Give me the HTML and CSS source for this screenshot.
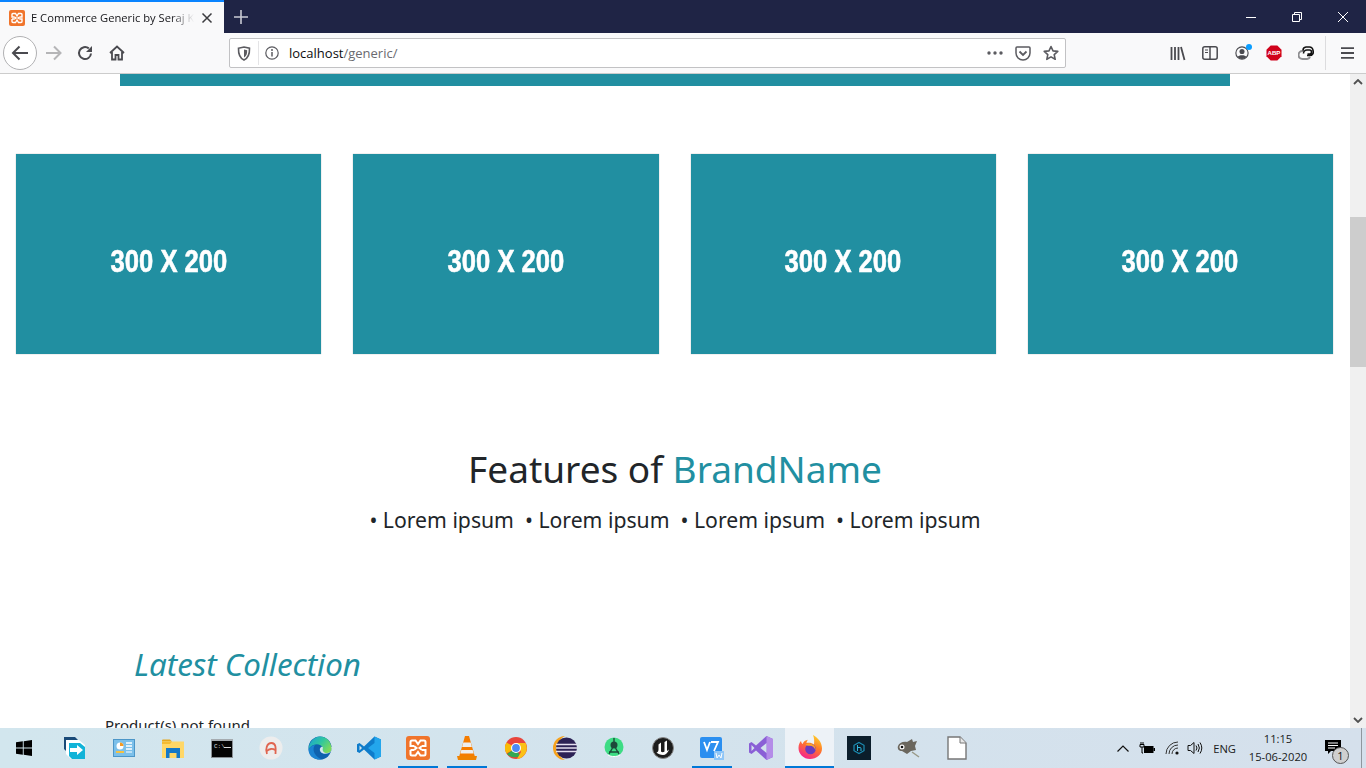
FILE: index.html
```html
<!DOCTYPE html>
<html lang="en">
<head>
    <meta charset="UTF-8">
    <meta name="viewport" content="width=device-width, initial-scale=1.0">
    <title>E Commerce Generic by Seraj Khan</title>
    <link rel="stylesheet" href="styles.css">
</head>
<body>
    <div class="tabbar">
        <div class="tab">
            <svg class="favicon" width="16" height="16" viewBox="0 0 16 16"><rect width="16" height="16" rx="2" fill="#f0742b"/><path d="M4 3.500h2.500L8 6l1.500-2.500H12a1 1 0 0 1 1 1V7h-2.500M4 3.500a1 1 0 0 0-1 1V7h2.500M3 9h2.500M3 9v2.500a1 1 0 0 0 1 1h2.500L8 10l1.500 2.500H12a1 1 0 0 0 1-1V9h-2.500M5.500 7 7 8l-1.500 1M10.500 7 9 8l1.500 1" fill="none" stroke="#fff" stroke-width="1.400"/></svg>
            <span class="tab-title">E Commerce Generic by Seraj Khan</span>
            <svg class="tab-close" width="12" height="12" viewBox="0 0 12 12"><path d="M1.500 1.500l9 9M10.500 1.500l-9 9" stroke="#3c3c3f" stroke-width="1.500"/></svg>
        </div>
        <svg class="new-tab" width="14" height="14" viewBox="0 0 14 14"><path d="M7 0v14M0 7h14" stroke="#c9cad3" stroke-width="1.600"/></svg>
        <div class="win-buttons">
            <div class="win-btn"><svg width="12" height="12" viewBox="0 0 12 12"><path d="M1 6.500h10" stroke="#fff"/></svg></div>
            <div class="win-btn"><svg width="12" height="12" viewBox="0 0 12 12"><path d="M1.500 3.500h7v7h-7zM3.500 3.500v-2h7v7h-2" fill="none" stroke="#fff"/></svg></div>
            <div class="win-btn"><svg width="12" height="12" viewBox="0 0 12 12"><path d="M1 1l10 10M11 1L1 11" stroke="#fff"/></svg></div>
        </div>
    </div>

    <div class="navbar">
        <div class="back-btn">
            <svg width="18" height="16" viewBox="0 0 18 16"><path d="M17 8H2M8.500 1.500 2 8l6.500 6.500" fill="none" stroke="#4a4a4f" stroke-width="2"/></svg>
        </div>
        <div class="nav-btn"><svg width="17" height="16" viewBox="0 0 17 16"><path d="M1 8h14M9 1.500 15.500 8 9 14.500" fill="none" stroke="#b5b5b7" stroke-width="2"/></svg></div>
        <div class="nav-btn"><svg width="16" height="16" viewBox="0 0 16 16"><path d="M14 8.500A6 6 0 1 1 11.800 3.400" fill="none" stroke="#4a4a4f" stroke-width="2"/><path d="M15 1v6H9z" fill="#4a4a4f"/></svg></div>
        <div class="nav-btn"><svg width="16" height="16" viewBox="0 0 16 16"><path d="M1 8 8 1.500 15 8M3 7v7.500h3.500V10h3v4.500H13V7" fill="none" stroke="#4a4a4f" stroke-width="1.800"/></svg></div>

        <div class="urlbar">
            <svg class="url-shield" width="14" height="15" viewBox="0 0 14 15"><path d="M1.500 2.200 7 1l5.500 1.200c.2 5.500-1.200 9.800-5.500 11.800C2.700 12 1.300 7.700 1.500 2.200z" fill="none" stroke="#5b5b60" stroke-width="1.600"/><path d="M7 3.500l3.200.7C10.200 7.800 9.500 10 7 11.500z" fill="#5b5b60"/></svg>
            <span class="url-sep"></span>
            <svg class="url-info" width="14" height="14" viewBox="0 0 14 14"><circle cx="7" cy="7" r="6.200" fill="none" stroke="#5b5b60" stroke-width="1.200"/><path d="M7 6v4.500" stroke="#5b5b60" stroke-width="1.500"/><circle cx="7" cy="3.900" r="1" fill="#5b5b60"/></svg>
            <span class="url-text">localhost<span class="url-path">/generic/</span></span>
            <div class="url-actions">
                <svg width="16" height="4" viewBox="0 0 16 4"><circle cx="2" cy="2" r="1.700" fill="#5b5b60"/><circle cx="8" cy="2" r="1.700" fill="#5b5b60"/><circle cx="14" cy="2" r="1.700" fill="#5b5b60"/></svg>
                <svg width="16" height="15" viewBox="0 0 16 15"><path d="M2 1h12a1 1 0 0 1 1 1v5a7 7 0 0 1-14 0V2a1 1 0 0 1 1-1z" fill="none" stroke="#5b5b60" stroke-width="1.500"/><path d="M4.500 5.500 8 9l3.500-3.500" fill="none" stroke="#5b5b60" stroke-width="1.800"/></svg>
                <svg width="16" height="16" viewBox="0 0 16 16"><path d="M8 1.500l2 4.400 4.800.5-3.600 3.200 1 4.700L8 11.900l-4.200 2.400 1-4.700L1.200 6.400 6 5.900z" fill="none" stroke="#5b5b60" stroke-width="1.600" stroke-linejoin="round"/></svg>
            </div>
        </div>

        <div class="tools">
            <div class="nav-btn"><svg width="16" height="15" viewBox="0 0 16 15"><path d="M1.500 1v13M5 1v13M8.500 1v13M11 1l3.500 13" fill="none" stroke="#4a4a4f" stroke-width="1.800"/></svg></div>
            <div class="nav-btn"><svg width="16" height="14" viewBox="0 0 16 14"><rect x=".8" y=".8" width="14.400" height="12.400" rx="2" fill="none" stroke="#4a4a4f" stroke-width="1.500"/><path d="M8 1v12" stroke="#4a4a4f" stroke-width="1.500"/><path d="M3 4h3M3 6.500h3" stroke="#4a4a4f"/></svg></div>
            <div class="nav-btn account">
                <svg width="14" height="14" viewBox="0 0 16 16"><circle cx="8" cy="8" r="7" fill="none" stroke="#4a4a4f" stroke-width="1.300"/><circle cx="8" cy="6.200" r="2.900" fill="#4a4a4f"/><path d="M3 12.500c1-2.700 9-2.700 10 0A6.500 6.500 0 0 1 3 12.500z" fill="#4a4a4f"/></svg>
                <span class="account-dot"></span>
            </div>
            <div class="nav-btn"><svg width="16" height="16" viewBox="0 0 17 17"><path d="M5 .5h7L16.500 5v7L12 16.500H5L.5 12V5z" fill="#d0021b"/><text x="8.500" y="11" class="abp-text" text-anchor="middle">ABP</text></svg></div>
            <div class="nav-btn"><svg width="16" height="14" viewBox="0 0 16 14"><path d="M6 5H4.500a3.500 3.500 0 0 0 0 8H9a3.500 3.500 0 0 0 3-2" fill="none" stroke="#8e8e91" stroke-width="2"/><path d="M5.500 7.500A3.500 3.500 0 0 1 9 4h2.500a2 2 0 0 1 0 4H9.500M5 4.500A3.500 3.500 0 0 1 8 1h3.500a3.500 3.500 0 0 1 3.500 3.500 3.500 3.500 0 0 1-3.500 5H9" fill="none" stroke="#111" stroke-width="1.600"/></svg></div>
            <span class="tool-sep"></span>
            <div class="nav-btn"><svg width="13" height="12" viewBox="0 0 13 12"><path d="M0 1.200h13M0 6h13M0 10.800h13" stroke="#4a4a4f" stroke-width="1.800"/></svg></div>
        </div>
    </div>

    <div class="viewport">
        <main class="page">
            <div class="top-strip"></div>

            <div class="banners">
                <div class="banner"><span class="banner-label">300 X 200</span></div>
                <div class="banner"><span class="banner-label">300 X 200</span></div>
                <div class="banner"><span class="banner-label">300 X 200</span></div>
                <div class="banner"><span class="banner-label">300 X 200</span></div>
            </div>

            <section class="features">
                <h2 class="features-title">Features of <span class="brand">BrandName</span></h2>
                <p class="features-list">• Lorem ipsum &nbsp;• Lorem ipsum &nbsp;• Lorem ipsum &nbsp;• Lorem ipsum</p>
            </section>

            <section class="collection">
                <h3 class="collection-title">Latest Collection</h3>
                <p class="empty-msg">Product(s) not found</p>
            </section>
        </main>

        <div class="scrollbar">
            <svg class="scroll-arrow" width="10" height="6" viewBox="0 0 10 6"><path d="M1 5l4-4 4 4" fill="none" stroke="#505050" stroke-width="1.800"/></svg>
            <div class="scroll-thumb"></div>
            <svg class="scroll-arrow scroll-arrow-down" width="10" height="6" viewBox="0 0 10 6"><path d="M1 1l4 4 4-4" fill="none" stroke="#505050" stroke-width="1.800"/></svg>
        </div>
    </div>

    <footer class="taskbar">
        <div class="start"><svg width="16" height="16" viewBox="0 0 16 16"><path d="M0 2.300 6.800 1.300v6.200H0zM7.700 1.200 16 0v7.500H7.700zM0 8.500h6.800v6.200L0 13.700zM7.700 8.500H16V16l-8.300-1.200z" fill="#000"/></svg></div>
        <div class="task"><svg width="24" height="24" viewBox="0 0 24 24"><path d="M1 1h11l5 5v12H6L1 13z" fill="#1a4a78"/><path d="M3 4h13l6 5v14H8l-5-5z" fill="#fff"/><path d="M6 7h11l5 4v12H9l-3-3z" fill="#12b3d8"/><path d="M7 12h7V9l6 5-6 5v-3H7z" fill="#fff"/></svg></div>
        <div class="task"><svg width="22" height="18" viewBox="0 0 22 18"><rect x=".5" y=".5" width="21" height="17" fill="#7cc0ea" stroke="#4c96c8"/><circle cx="7" cy="7" r="3.500" fill="#fff"/><path d="M7 7V3.500A3.500 3.500 0 0 1 10.500 7z" fill="#f59a23"/><path d="M13 4h6M13 7h6M13 10h6" stroke="#fff" stroke-width="1.500"/><path d="M3 13h8" stroke="#f5c242" stroke-width="2"/><path d="M13 13h6" stroke="#fff"/></svg></div>
        <div class="task"><svg width="22" height="19" viewBox="0 0 22 19"><path d="M0 1.500a1 1 0 0 1 1-1h7l2 2H0z" fill="#e6a81e"/><path d="M0 2.500h22V19H0z" fill="#ffd767"/><path d="M4 9h14v10h-3.500v-5h-7v5H4z" fill="#1478c8"/><path d="M0 2.500h10L8 5H0z" fill="#f4bb33"/></svg></div>
        <div class="task"><svg width="22" height="19" viewBox="0 0 22 19"><rect x=".5" y=".5" width="21" height="18" fill="#050505" stroke="#8a8f94"/><path d="M0 0h22v2H0z" fill="#a5abb0"/><text x="3" y="9" class="cmd-text">C:\</text><path d="M13 8.500h7" stroke="#ddd"/></svg></div>
        <div class="task"><svg width="24" height="24" viewBox="0 0 24 24"><circle cx="12" cy="12" r="11.500" fill="#ededed"/><path d="M8 18c-2-5 0-11 4.500-11S17 12 16.500 18M8 15c2-2.500 6-2.500 8-1" fill="none" stroke="#e0644f" stroke-width="1.800"/></svg></div>
        <div class="task"><svg width="24" height="24" viewBox="0 0 24 24"><defs><linearGradient id="edgeGreen" x1="0" y1="0" x2="1" y2=".6"><stop offset="0" stop-color="#1a9fd8"/><stop offset=".55" stop-color="#2fc6a0"/><stop offset="1" stop-color="#7ad95c"/></linearGradient></defs><circle cx="12" cy="12" r="11.500" fill="#0f62ae"/><path d="M23.500 14c-2 4.500-8.500 5-11 1.800-1.300-1.800-.8-4.300 1.500-5.300l10 .5z" fill="#d2e5ee"/><path d="M12 .5C18.500.5 23.500 5.500 23.500 13c0 3-3 4.500-5.800 4-2.500-.5-3.700-3-2.700-5.200C13.500 8.500 9 7.500 5.500 9 3.200 10 1.500 11.500.5 13.500 1 6 6 .5 12 .5z" fill="url(#edgeGreen)"/><path d="M.5 13.500C2 11 4 9.500 7 9c-1.800 2.300-2 6 0 9 1.500 2.500 4 4.500 7 5.300C6 24.500.5 20 .5 13.500z" fill="#1b83d2"/></svg></div>
        <div class="task"><svg width="24" height="24" viewBox="0 0 24 24"><path d="M17.500.5 24 3.500v17L17.500 23.500 7 13.500 2.500 17 0 15.700V8.300L2.500 7 7 10.500z" fill="#0e7ccb"/><path d="M17.500.5 24 3.500v17l-6.500 3V17L11 12l6.500-5z" fill="#23a6ec"/><path d="M2.500 9.500v5L5 12z" fill="#d2e5ee"/></svg></div>
        <div class="task"><svg width="24" height="24" viewBox="0 0 24 24"><rect width="24" height="24" rx="3" fill="#f0742b"/><path d="M6 4.500h3.500L12 8l2.500-3.500H18a1.500 1.500 0 0 1 1.500 1.500v4H16M6 4.500A1.500 1.500 0 0 0 4.500 6v4H8M4.500 14H8M4.500 14v4A1.500 1.500 0 0 0 6 19.500h3.500L12 16l2.500 3.500H18a1.500 1.500 0 0 0 1.500-1.500v-4H16M8 10l2.500 2L8 14M16 10l-2.500 2 2.500 2" fill="none" stroke="#fff" stroke-width="2"/></svg></div>
        <div class="task"><svg width="20" height="24" viewBox="0 0 20 24"><path d="M8 0h4l6 21H2z" fill="#f57c00"/><path d="M6.300 6.500h7.400l1.200 4.500H5.100zM4.300 14h11.400l1 3.500H3.300z" fill="#eee"/><path d="M0 20h20l-1 4H1z" fill="#ef8200"/></svg></div>
        <div class="task"><svg width="22" height="22" viewBox="0 0 22 22"><circle cx="11" cy="11" r="11" fill="#e8453c"/><path d="M11 11 1.500 16.500A11 11 0 0 1 1.500 5.500z" fill="#f9bc05"/><path d="M2 17 11 11l4 8a11 11 0 0 1-13-2z" fill="#34a853"/><path d="M11 6h9.600A11 11 0 0 1 12 22l4-7z" fill="#fbc116"/><circle cx="11" cy="11" r="5" fill="#fff"/><circle cx="11" cy="11" r="3.900" fill="#4b8bf5"/></svg></div>
        <div class="task"><svg width="24" height="24" viewBox="0 0 24 24"><path d="M12 0a12 12 0 0 0 0 24c-5-2-6-7-6-12S7 2 12 0z" fill="#f6a21e"/><circle cx="13.500" cy="12" r="10.500" fill="#2c2255"/><path d="M3 8.500h21M3 12h21M3 15.500h21" stroke="#e4dff0" stroke-width="1.500"/></svg></div>
        <div class="task"><svg width="20" height="22" viewBox="0 0 20 22"><circle cx="10" cy="10" r="9.500" fill="#3ddc84"/><circle cx="10" cy="8" r="3.500" fill="#1d4a3a"/><path d="M10 1v4M5 17l3.500-6M15 17l-3.500-6M5 15h10" stroke="#1d4a3a" stroke-width="1.400"/><path d="M4 18c3 2 9 2 12 0" fill="none" stroke="#fff"/></svg></div>
        <div class="task"><svg width="22" height="22" viewBox="0 0 22 22"><circle cx="11" cy="11" r="10.500" fill="#1d1d1d" stroke="#888"/><path d="M4.500 15.500C6.500 15 6.500 13 6.500 12V7.500L9 5.500V14c0 1.500 2.500 1.500 3.500.5V5l2.500-1.500V14l2-1.500C16 16 13.500 18 11 18c-2.500 0-5-1-6.500-2.500z" fill="#fff"/></svg></div>
        <div class="task"><svg width="24" height="24" viewBox="0 0 24 24"><rect y="1" width="22" height="21" rx="2" fill="#2b8ff0"/><path d="M4 6l3 8 3-8M11 6h7l-4 9" fill="none" stroke="#fff" stroke-width="1.800"/><rect x="14" y="15" width="10" height="9" fill="#8fc6f7"/><path d="M16 17l1 5 2-3 2 3 1-5" fill="none" stroke="#fff"/></svg></div>
        <div class="task"><svg width="24" height="24" viewBox="0 0 24 24"><path d="M17.500 0 24 3v18l-6.500 3L7 14.500 2.500 18 0 16.500v-9L2.500 6 7 9.500z" fill="#8a5fd6"/><path d="M17.500 0 24 3v18l-6.500 3z" fill="#b48ce8"/><path d="M17.500 7l-6 5 6 5zM2.500 9v6L5.500 12z" fill="#d3e2ed"/></svg></div>
        <div class="task task-active"><svg width="24" height="24" viewBox="0 0 24 24"><defs><linearGradient id="foxFlame" x1=".8" y1="0" x2=".3" y2="1"><stop offset="0" stop-color="#ffd52a"/><stop offset=".45" stop-color="#ff7a28"/><stop offset="1" stop-color="#f5208f"/></linearGradient></defs><path d="M15 0c4.500 2.500 9 7 9 13.500C24 19.500 18.500 24 12 24 5.500 24 .5 19 .5 13c0-3 1-5.500 2.500-7 .3 1.500.8 2.500 1.700 3C5.500 6.500 7.500 5 10 4.800 9 6 8.500 7 8.500 8c2.500-.8 5.500-.3 7.500 1.500C16.500 6 16.200 3 15 0z" fill="url(#foxFlame)"/><circle cx="12.500" cy="14" r="5.300" fill="#6b3bbd"/><path d="M7.500 9.500c3-1.700 7-1 9 1.500 1 1.500 1.200 3 1 4.500-.8-3-3-4.700-5.500-4.700-1.500 0-3 .3-4.500-1.300z" fill="#ffa526"/></svg></div>
        <div class="task"><svg width="24" height="24" viewBox="0 0 24 24"><rect width="24" height="24" fill="#0b1e2b"/><path d="M12 6.500 17 9.300v5.400L12 17.500l-5-2.800V9.300z" fill="none" stroke="#1b8db3" stroke-width="1.200"/><path d="M10.500 9v6M10.500 11.500h2.500a1 1 0 0 1 1 1V15" fill="none" stroke="#31b8df"/></svg></div>
        <div class="task"><svg width="24" height="20" viewBox="0 0 24 20"><path d="M2 8c1-3 5-5 9-4l5-3 1 3 4-1-2 5 1 4-5 1-4 3-5-3C3 13 1 11 2 8z" fill="#6b675e"/><circle cx="6" cy="9" r="2.500" fill="#fff"/><circle cx="6" cy="9" r="1.300" fill="#111"/><path d="M16 14l7 5" stroke="#998" stroke-width="1.500"/></svg></div>
        <div class="task"><svg width="20" height="24" viewBox="0 0 20 24"><path d="M1 1h12l6 6v16H1z" fill="#fff" stroke="#777" stroke-width="1.400"/><path d="M13 1v6h6" fill="#e8e8e8" stroke="#777"/></svg></div>

        <div class="tray">
            <svg class="tray-chevron" width="12" height="7" viewBox="0 0 12 7"><path d="M.5 6.500 6 1l5.500 5.500" fill="none" stroke="#111" stroke-width="1.200"/></svg>
            <svg class="tray-battery" width="16" height="12" viewBox="0 0 16 12"><path d="M1 2.500h4v2.500H1zM2 0v2.500M4 0v2.500M3 5v6h1" fill="none" stroke="#000"/><rect x="5" y="4" width="9.500" height="7" fill="#000"/><path d="M14.500 6H16v3h-1.500z" fill="#000"/></svg>
            <svg class="tray-wifi" width="15" height="14" viewBox="0 0 15 14"><path d="M1 13A12 12 0 0 1 13 1M4 13A9 9 0 0 1 13 4M7 13a6 6 0 0 1 6-6" fill="none" stroke="#333"/><circle cx="12" cy="12" r="1.600" fill="#111"/></svg>
            <svg class="tray-volume" width="16" height="14" viewBox="0 0 16 14"><path d="M1 4.500h2.500L7 1.500v11l-3.500-3H1z" fill="none" stroke="#111"/><path d="M9 4.500a4 4 0 0 1 0 5M11 3a7 7 0 0 1 0 8M13 1.500a10 10 0 0 1 0 11" fill="none" stroke="#111"/></svg>
            <span class="tray-lang">ENG</span>
            <div class="clock"><span>11:15</span><span>15-06-2020</span></div>
            <div class="notify">
                <svg width="16" height="14" viewBox="0 0 16 14"><path d="M0 0h16v11H6l-3 3v-3H0z" fill="#000"/><path d="M3 3h10M3 5.500h10M3 8h7" stroke="#fff"/></svg>
                <span class="notify-badge">1</span>
            </div>
            <span class="show-desktop"></span>
        </div>
    </footer>
</body>
</html>
```

FILE: styles.css
```css
* {
    box-sizing: border-box;
}

html, body {
    margin: 0;
    height: 768px;
    overflow: hidden;
}

body {
    font-family: "Noto Sans", sans-serif;
    background-color: #fff;
    color: #212529;
    display: flex;
    flex-direction: column;
}

svg {
    display: block;
    flex: none;
}

/* browser tab strip */
.tabbar {
    height: 33px;
    background-color: #1f2445;
    display: flex;
    align-items: center;
    flex: none;
}

.tab {
    width: 224px;
    height: 33px;
    background-color: #f9f9fa;
    border-top: 2px solid #0a84ff;
    display: flex;
    align-items: center;
    padding: 0 11px 0 9px;
}

.favicon {
    margin-right: 6px;
}

.tab-title {
    flex: 1;
    font-family: "Open Sans", sans-serif;
    font-size: 11.200px;
    white-space: nowrap;
    overflow: hidden;
    color: #16161a;
    -webkit-mask-image: linear-gradient(to right, #000 86%, transparent);
    mask-image: linear-gradient(to right, #000 86%, transparent);
}

.tab-close {
    margin-left: 7px;
}

.new-tab {
    margin-left: 10px;
}

.win-buttons {
    margin-left: auto;
    display: flex;
}

.win-btn {
    width: 46px;
    height: 33px;
    display: flex;
    align-items: center;
    justify-content: center;
}

/* toolbar */
.navbar {
    height: 41px;
    background-color: #f9f9fa;
    border-bottom: 1px solid #ccc;
    display: flex;
    align-items: center;
    padding-left: 3px;
    flex: none;
}

.back-btn {
    width: 34px;
    height: 34px;
    border: 1px solid #b1b1b3;
    border-radius: 50%;
    background-color: #fff;
    display: flex;
    align-items: center;
    justify-content: center;
}

.nav-btn {
    width: 32px;
    height: 32px;
    display: flex;
    align-items: center;
    justify-content: center;
    position: relative;
}

.urlbar {
    width: 837px;
    height: 30px;
    margin-left: 96px;
    background-color: #fff;
    border: 1px solid #c2c2c4;
    border-radius: 2px;
    display: flex;
    align-items: center;
    padding-left: 7px;
}

.url-sep {
    width: 1px;
    height: 24px;
    background-color: #e4e4e6;
    margin: 0 6px 0 7px;
}

.url-text {
    margin-left: 10px;
    font-family: "Open Sans", sans-serif;
    font-size: 13px;
    color: #0c0c0d;
}

.url-path {
    color: #6a6a6f;
}

.url-actions {
    margin-left: auto;
    display: flex;
    align-items: center;
    gap: 12px;
    padding-right: 6px;
}

.tools {
    margin-left: auto;
    display: flex;
    align-items: center;
    padding-right: 3px;
}

.tool-sep {
    width: 1px;
    height: 34px;
    background-color: #dcdcde;
    margin: 0 5px 0 3px;
}

.account-dot {
    position: absolute;
    top: 7px;
    right: 6px;
    width: 6px;
    height: 6px;
    border-radius: 50%;
    background-color: #0a9dff;
}

.abp-text {
    font-family: "Liberation Sans", sans-serif;
    font-size: 6.500px;
    font-weight: 700;
    fill: #fff;
}

.cmd-text {
    font-family: "Liberation Mono", monospace;
    font-size: 6px;
    fill: #ddd;
}

/* page */
.viewport {
    flex: 1;
    min-height: 0;
    display: flex;
    overflow: hidden;
}

.page {
    width: 1350px;
    flex: none;
}

.top-strip {
    width: 1110px;
    height: 12px;
    margin-left: 120px;
    background-color: #218fa1;
}

.banners {
    display: grid;
    grid-template-columns: repeat(4, 1fr);
    gap: 32px;
    margin-top: 68px;
    padding: 0 17px 0 16px;
}

.banner {
    height: 200px;
    background-color: #218fa1;
    box-shadow: 0 0 1px rgba(0, 0, 0, 0.35);
    display: flex;
    align-items: center;
    justify-content: center;
}

.banner-label {
    font-family: "Liberation Sans", sans-serif;
    font-weight: 700;
    font-size: 32px;
    color: #fff;
    -webkit-text-stroke: 0.6px #fff;
    transform: scaleX(0.8);
    margin-top: 14px;
}

.features {
    margin-top: 90px;
    text-align: center;
}

.features-title {
    margin: 0;
    font-size: 37px;
    font-weight: 400;
    line-height: 50px;
}

.brand {
    color: #218fa1;
}

.features-list {
    margin: 10px 0 0;
    font-size: 21.200px;
    line-height: 32px;
}

.collection {
    margin-top: 106px;
}

.collection-title {
    margin: 0 0 0 134px;
    font-size: 31.300px;
    font-weight: 400;
    font-style: italic;
    color: #218fa1;
    line-height: 44px;
}

.empty-msg {
    margin: 27px 0 0 105px;
    font-size: 15px;
    line-height: 24px;
}

/* page scrollbar */
.scrollbar {
    width: 16px;
    background-color: #f0f0f0;
    display: flex;
    flex-direction: column;
    align-items: center;
    padding-top: 5px;
}

.scroll-thumb {
    width: 16px;
    height: 150px;
    margin-top: 132px;
    background-color: #cdcdcd;
}

.scroll-arrow-down {
    margin-top: auto;
    margin-bottom: 5px;
}

/* windows taskbar */
.taskbar {
    height: 40px;
    flex: none;
    background: linear-gradient(to right, #d2e6ee, #d5e0ec);
    display: flex;
    align-items: center;
}

.start {
    width: 50px;
    height: 40px;
    padding-right: 2px;
    display: flex;
    align-items: center;
    justify-content: center;
}

.task {
    width: 49px;
    height: 40px;
    display: flex;
    align-items: center;
    justify-content: center;
    position: relative;
}

.task:nth-child(9)::after,
.task:nth-child(10)::after,
.task:nth-child(15)::after {
    content: "";
    position: absolute;
    left: 5px;
    right: 4px;
    bottom: 0;
    height: 2px;
    background-color: #0078d7;
}

.task-active {
    background-color: #edf2f7;
    border-bottom: 2px solid #0078d7;
}

.tray {
    margin-left: auto;
    height: 40px;
    display: flex;
    align-items: center;
}

.tray-battery {
    margin-left: 10px;
}

.tray-wifi {
    margin-left: 10px;
}

.tray-volume {
    margin-left: 7px;
}

.tray-lang {
    margin-left: 10px;
    font-family: "Open Sans", sans-serif;
    font-size: 11.200px;
    color: #1a1a1a;
}

.clock {
    width: 64px;
    margin-left: 10px;
    display: flex;
    flex-direction: column;
    align-items: center;
    font-family: "Open Sans", sans-serif;
    font-size: 11.200px;
    line-height: 18px;
    color: #1a1a1a;
}

.notify {
    width: 24px;
    height: 24px;
    margin-left: 15px;
    margin-top: 8px;
    position: relative;
}

.notify-badge {
    position: absolute;
    left: 7px;
    top: 7px;
    width: 17px;
    height: 17px;
    border-radius: 50%;
    border: 1px solid #555;
    background-color: #cfcfcf;
    font-family: "Open Sans", sans-serif;
    font-size: 11px;
    line-height: 15px;
    text-align: center;
    color: #111;
}

.show-desktop {
    width: 1px;
    height: 40px;
    margin-left: 12px;
    margin-right: 4px;
    background-color: #8e979e;
}
```
